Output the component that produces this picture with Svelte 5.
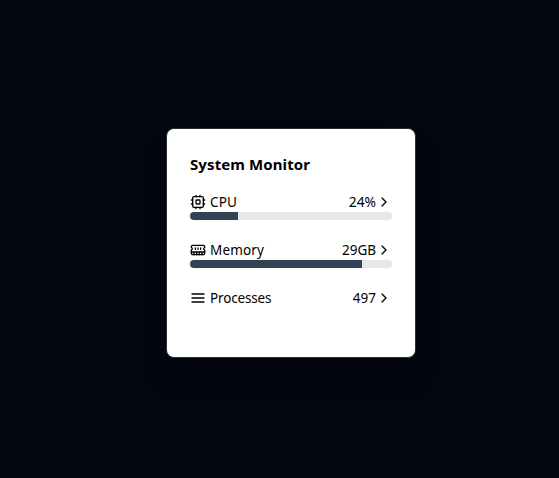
<script>
  const rows = [
    { icon: 'cpu', label: 'CPU', value: '24%', percent: 24 },
    { icon: 'memory', label: 'Memory', value: '29GB', percent: 85 },
    { icon: 'menu', label: 'Processes', value: '497', percent: null }
  ];
</script>

<main>
  <section class="card">
    <h1>System Monitor</h1>
    {#each rows as row}
      <div class="metric">
        <div class="line {row.icon}">
          <svg viewBox="0 0 24 24">
            {#if row.icon === 'cpu'}
              <rect x="4" y="4" width="16" height="16" rx="2" />
              <rect x="9" y="9" width="6" height="6" rx="1" />
              <path d="M15 2v2M15 20v2M2 15h2M2 9h2M20 15h2M20 9h2M9 2v2M9 20v2" />
            {:else if row.icon === 'memory'}
              <path d="M6 19v-3M10 19v-3M14 19v-3M18 19v-3M8 11V9M16 11V9M12 11V9M2 15h20" />
              <path d="M2 7a2 2 0 0 1 2-2h16a2 2 0 0 1 2 2v1.1a2 2 0 0 0 0 3.837V17a2 2 0 0 1-2 2H4a2 2 0 0 1-2-2v-5.1a2 2 0 0 0 0-3.837Z" />
            {:else}
              <path d="M3 6h18M3 12h18M3 18h18" />
            {/if}
          </svg>
          <span class="label">{row.label}</span>
          <span class="value">{row.value}</span>
          <svg viewBox="0 0 24 24"><path d="m9 18 6-6-6-6" /></svg>
        </div>
        {#if row.percent !== null}
          <div class="track"><div class="fill" style="width: {row.percent}%"></div></div>
        {/if}
      </div>
    {/each}
  </section>
</main>

<style>
  :global(body) { background: #020611; }
  main {
    box-sizing: border-box;
    width: 558px;
    height: 478px;
    margin-left: 12px;
    padding-top: 128px;
    display: flex;
    justify-content: center;
    align-items: flex-start;
    font-family: "Noto Sans", sans-serif;
    color: #000;
    overflow: hidden;
  }
  .card {
    box-sizing: border-box;
    width: 250px;
    height: 230px;
    padding: 23px;
    border: 1px solid #2b2d33;
    border-radius: 8px;
    background: #fff;
    box-shadow: 0 20px 25px -5px rgba(0, 0, 0, 0.3);
  }
  h1 {
    margin: 0 0 16px;
    font-size: 15px;
    letter-spacing: 0.1px;
    line-height: 24px;
    font-weight: 700;
    white-space: nowrap;
  }
  .metric { height: 48px; }
  .line { display: flex; align-items: center; height: 20px; }
  svg {
    width: 16px;
    height: 16px;
    flex: none;
    fill: none;
    stroke: #000;
    stroke-width: 2;
    stroke-linecap: round;
    stroke-linejoin: round;
  }
  .label, .value { font-size: 13.5px; line-height: 20px; }
  .label { margin-left: 4px; }
  .value { margin-left: auto; }
  .cpu .label { letter-spacing: 0.1px; }
  .cpu .value { font-size: 13.8px; }
  .memory .label { letter-spacing: 0.15px; }
  .menu .label { letter-spacing: -0.15px; }
  .track { height: 8px; border-radius: 4px; overflow: hidden; background: #e5e7eb; }
  .fill { height: 100%; background: #334155; }
</style>
